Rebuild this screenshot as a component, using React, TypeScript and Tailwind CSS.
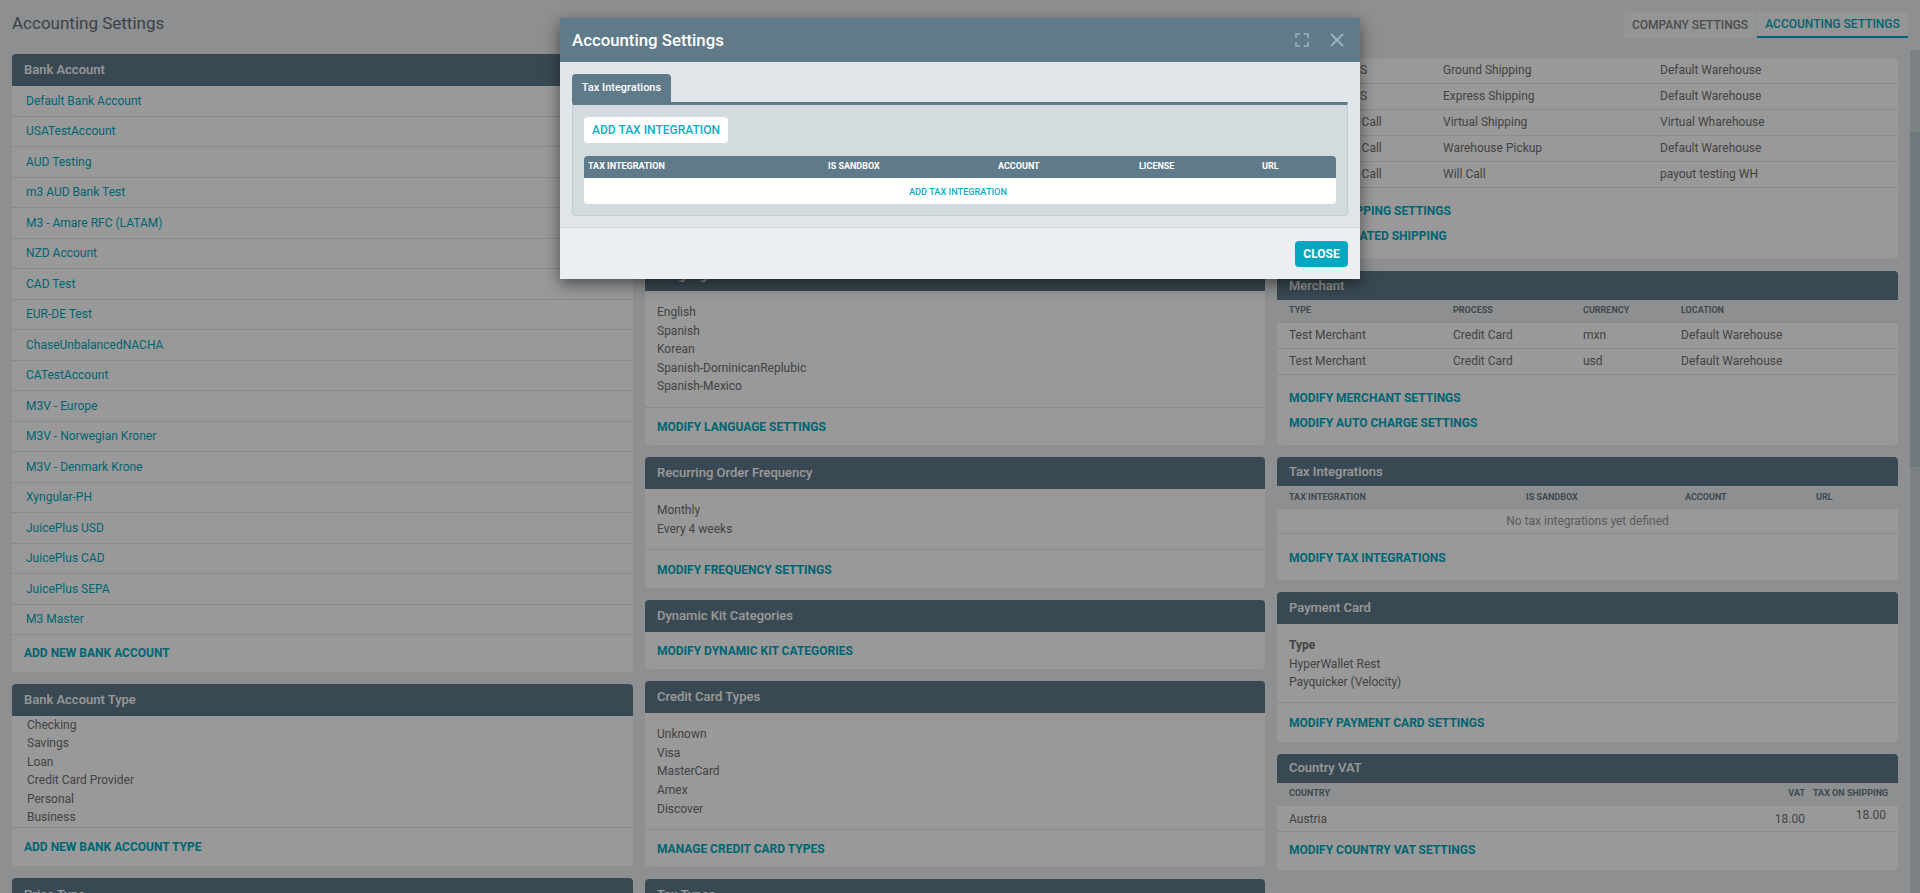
// App.tsx
import React from 'react';

const bankAccounts = [
  'Default Bank Account', 'USATestAccount', 'AUD Testing', 'm3 AUD Bank Test', 'M3 - Amare RFC (LATAM)',
  'NZD Account', 'CAD Test', 'EUR-DE Test', 'ChaseUnbalancedNACHA', 'CATestAccount', 'M3V - Europe',
  'M3V - Norwegian Kroner', 'M3V - Denmark Krone', 'Xyngular-PH', 'JuicePlus USD', 'JuicePlus CAD',
  'JuicePlus SEPA', 'M3 Master',
];

const shipping = [
  ['Shipping - UPS', 'Ground Shipping', 'Default Warehouse'],
  ['Shipping - UPS', 'Express Shipping', 'Default Warehouse'],
  ['Overland Will Call', 'Virtual Shipping', 'Virtual Wharehouse'],
  ['Overland Will Call', 'Warehouse Pickup', 'Default Warehouse'],
  ['Overland Will Call', 'Will Call', 'payout testing WH'],
];

function CardHeader({ title, short }: { title: string; short?: boolean }) {
  return (
    <div className={`${short ? 'h-[29px]' : 'h-8'} bg-[#5f7b8a] rounded-t-sm px-3 flex items-center text-white text-[13px] font-medium`}>
      {title}
    </div>
  );
}

function CardLink({ children }: { children: React.ReactNode }) {
  return <a className="block text-[#00a9c0] text-[12px] leading-[25px] font-bold uppercase">{children}</a>;
}

function SimpleList({ items }: { items: string[] }) {
  return (
    <div className="px-3 pt-3 pb-[11px] border-b border-[#e4e6e8] text-[#707070] text-[12px] leading-[18.6px]">
      {items.map((i) => <div key={i}>{i}</div>)}
    </div>
  );
}

export default function App() {
  return (
    <div className="relative h-[893px] overflow-hidden bg-[#ebeff2] font-['Roboto',sans-serif]">
      {/* Top bar */}
      <div className="h-[50px] flex items-start justify-between pl-3 pr-3 pt-3">
        <h1 className="text-[17px] leading-[22px] text-[#5f6f78] font-normal">Accounting Settings</h1>
        <div className="flex gap-px text-[12px] font-medium uppercase">
          <div className="h-[26px] w-[132px] flex items-center justify-center bg-[#f7f8f9] text-[#808080] rounded-sm">Company Settings</div>
          <div className="h-[26px] w-[151px] flex items-center justify-center bg-[#f7f8f9] text-[#00a9c0] border-b-[2px] border-[#00a9c0]">Accounting Settings</div>
        </div>
      </div>

      <div className="flex h-[843px]">
        <div className="flex-1 overflow-hidden pl-3 pr-3 pt-1 flex gap-3">
          {/* Column 1 */}
          <div className="w-[621px] shrink-0 flex flex-col gap-3">
            <section className="bg-white rounded-sm shrink-0">
              <CardHeader title="Bank Account" />
              {bankAccounts.map((b) => (
                <div key={b} className="h-[30.5px] pl-3.5 flex items-center border-b border-[#e4e6e8] text-[12px] text-[#00a9c0]">{b}</div>
              ))}
              <div className="h-[37px] px-3 flex items-center"><CardLink>Add New Bank Account</CardLink></div>
            </section>
            <section className="bg-white rounded-sm shrink-0">
              <CardHeader title="Bank Account Type" />
              <div className="pl-[15px] pb-[1px] border-b border-[#e4e6e8] text-[#707070] text-[12px] leading-[18.4px]">
                {['Checking', 'Savings', 'Loan', 'Credit Card Provider', 'Personal', 'Business'].map((i) => <div key={i}>{i}</div>)}
              </div>
              <div className="h-[38px] px-3 flex items-center"><CardLink>Add New Bank Account Type</CardLink></div>
            </section>
            <section className="bg-white rounded-sm shrink-0">
              <CardHeader title="Price Type" />
            </section>
          </div>

          {/* Column 2 */}
          <div className="w-[620px] shrink-0 flex flex-col gap-3">
            <section className="h-[193px] bg-white rounded-sm shrink-0">
              <CardHeader title="Currency" />
            </section>
            <section className="bg-white rounded-sm shrink-0">
              <CardHeader title="Languages" />
              <SimpleList items={['English', 'Spanish', 'Korean', 'Spanish-DominicanReplubic', 'Spanish-Mexico']} />
              <div className="h-[37px] px-3 pt-[2px] flex items-center"><CardLink>Modify Language Settings</CardLink></div>
            </section>
            <section className="bg-white rounded-sm shrink-0">
              <CardHeader title="Recurring Order Frequency" />
              <SimpleList items={['Monthly', 'Every 4 weeks']} />
              <div className="h-[38px] px-3 pt-[3px] flex items-center"><CardLink>Modify Frequency Settings</CardLink></div>
            </section>
            <section className="bg-white rounded-sm shrink-0">
              <CardHeader title="Dynamic Kit Categories" />
              <div className="h-[37px] px-3 pt-[2px] flex items-center"><CardLink>Modify Dynamic Kit Categories</CardLink></div>
            </section>
            <section className="bg-white rounded-sm shrink-0">
              <CardHeader title="Credit Card Types" />
              <SimpleList items={['Unknown', 'Visa', 'MasterCard', 'Amex', 'Discover']} />
              <div className="h-[37px] px-3 pt-px flex items-center"><CardLink>Manage Credit Card Types</CardLink></div>
            </section>
            <section className="bg-white rounded-sm shrink-0">
              <CardHeader title="Tax Types" />
            </section>
          </div>

          {/* Column 3 */}
          <div className="w-[621px] shrink-0 flex flex-col gap-3 pt-[3px]">
            <section className="bg-white rounded-sm shrink-0">
              {shipping.map((r, i) => (
                <div key={i} className="h-[26px] px-3 pb-px grid grid-cols-[154px_217px_1fr] items-center border-t border-[#e4e6e8] text-[12px] text-[#707070]">
                  <span className="whitespace-nowrap">{r[0]}</span><span>{r[1]}</span><span>{r[2]}</span>
                </div>
              ))}
              <div className="px-3 pt-[11px] pb-[10px] border-t border-[#e4e6e8]">
                <CardLink>Modify Shipping Settings</CardLink>
                <CardLink>Modify Uprated Shipping</CardLink>
              </div>
            </section>

            <section className="bg-white rounded-sm shrink-0">
              <CardHeader title="Merchant" short />
              <div className="h-[23px] px-3 grid grid-cols-[164px_130px_98px_1fr] items-center bg-[#ebeff2] border-b border-[#e4e6e8] text-[9px] font-bold uppercase text-[#6a7a84]">
                <span>Type</span><span>Process</span><span>Currency</span><span>Location</span>
              </div>
              {[['Test Merchant', 'Credit Card', 'mxn', 'Default Warehouse'], ['Test Merchant', 'Credit Card', 'usd', 'Default Warehouse']].map((r) => (
                <div key={r[2]} className="h-[26px] px-3 pb-px grid grid-cols-[164px_130px_98px_1fr] items-center border-b border-[#e4e6e8] text-[12px] text-[#707070]">
                  <span>{r[0]}</span><span>{r[1]}</span><span>{r[2]}</span><span>{r[3]}</span>
                </div>
              ))}
              <div className="px-3 pt-[11px] pb-[9px]">
                <CardLink>Modify Merchant Settings</CardLink>
                <CardLink>Modify Auto Charge Settings</CardLink>
              </div>
            </section>

            <section className="bg-white rounded-sm shrink-0">
              <CardHeader title="Tax Integrations" short />
              <div className="h-[23px] px-3 grid grid-cols-[237px_159px_131px_1fr] items-center bg-[#ebeff2] text-[9px] font-bold uppercase text-[#6a7a84]">
                <span>Tax Integration</span><span>Is Sandbox</span><span>Account</span><span>URL</span>
              </div>
              <div className="h-[25px] flex items-center justify-center border-b border-[#e4e6e8] text-[12px] text-[#999]">No tax integrations yet defined</div>
              <div className="h-[46px] px-3 pt-[2px] flex items-center"><CardLink>Modify Tax Integrations</CardLink></div>
            </section>

            <section className="bg-white rounded-sm shrink-0">
              <CardHeader title="Payment Card" />
              <div className="px-3 pt-[12px] pb-[10px] border-b border-[#e4e6e8] text-[12px] text-[#707070] leading-[18.5px]">
                <div className="font-bold">Type</div>
                <div>HyperWallet Rest</div>
                <div>Payquicker (Velocity)</div>
              </div>
              <div className="h-[39px] px-3 pt-[2px] flex items-center"><CardLink>Modify Payment Card Settings</CardLink></div>
            </section>

            <section className="bg-white rounded-sm shrink-0">
              <CardHeader title="Country VAT" short />
              <div className="h-[23px] px-3 grid grid-cols-[1fr_auto_73px] gap-x-2 items-center bg-[#ebeff2] text-[9px] font-bold uppercase text-[#6a7a84]">
                <span>Country</span><span className="text-right">VAT</span><span className="text-right whitespace-nowrap">Tax on Shipping</span>
              </div>
              <div className="h-[26px] px-3 grid grid-cols-[1fr_auto_73px] gap-x-2 items-center border-b border-[#e4e6e8] text-[12px] text-[#707070]">
                <span>Austria</span><span>18.00</span><span className="text-right mb-2">18.00</span>
              </div>
              <div className="h-[38px] px-3 flex items-center"><CardLink>Modify Country VAT Settings</CardLink></div>
            </section>
          </div>
        </div>

        {/* Scrollbar */}
        <div className="w-[10px] shrink-0 bg-[#cdd8dd] pt-[82px]">
          <div className="h-[335px] bg-[#b9c9d1]" />
        </div>
      </div>

      {/* Backdrop */}
      <div className="absolute inset-0 bg-black/40" />

      {/* Modal */}
      <div className="absolute left-[560px] top-[18px] w-[800px] h-[261px] flex flex-col shadow-[0_5px_15px_rgba(0,0,0,0.5)]">
        <div className="h-[44px] shrink-0 bg-[#5f7b8a] pl-3 flex items-center text-white">
          <span className="text-[16.8px] font-medium pt-px">Accounting Settings</span>
          <svg className="ml-auto" width="14" height="14" viewBox="0 0 14 14" fill="none" stroke="#8fa5b1" strokeWidth="2">
            <path d="M1 5V1H5M9 1H13V5M13 9V13H9M5 13H1V9" />
          </svg>
          <svg className="ml-[21px] mr-[16px]" width="14" height="14" viewBox="0 0 14 14" fill="none" stroke="#9fb2bc" strokeWidth="2">
            <path d="M1 1L13 13M13 1L1 13" />
          </svg>
        </div>
        <div className="h-[166px] shrink-0 bg-[#e0e6e9] border-b border-[#d3dbde] px-3 pt-3">
          <div className="w-[99px] h-[28px] bg-[#5f7b8a] rounded-t-sm flex items-center justify-center text-white text-[11px] font-medium">Tax Integrations</div>
          <div className="h-[114px] bg-[#d3dbde] border-t-[3px] border-[#5f7b8a] border-x border-b border-x-[#c3ccd1] border-b-[#c3ccd1] px-[11px] pt-3 rounded-b-sm">
            <button className="h-[26px] w-[144px] block bg-white rounded-sm text-[#0badc4] text-[12px] font-medium uppercase">Add Tax Integration</button>
            <div className="mt-[13px] h-[22px] px-1 bg-[#5f7b8a] rounded-t-sm grid grid-cols-[240px_170px_141px_123px_1fr] items-center text-white text-[9px] font-bold uppercase">
              <span>Tax Integration</span><span>Is Sandbox</span><span>Account</span><span>License</span><span>URL</span>
            </div>
            <div className="h-[26px] pt-[2px] pr-1 bg-white rounded-b-sm flex items-center justify-center text-[#0badc4] text-[9.2px] font-medium uppercase">Add Tax Integration</div>
          </div>
        </div>
        <div className="flex-1 bg-[#ebeff2] flex items-start justify-end pr-3 pt-[13px]">
          <button className="h-[26px] w-[53px] bg-[#00a9c0] rounded-sm text-white text-[12px] font-bold uppercase">Close</button>
        </div>
      </div>
    </div>
  );
}
